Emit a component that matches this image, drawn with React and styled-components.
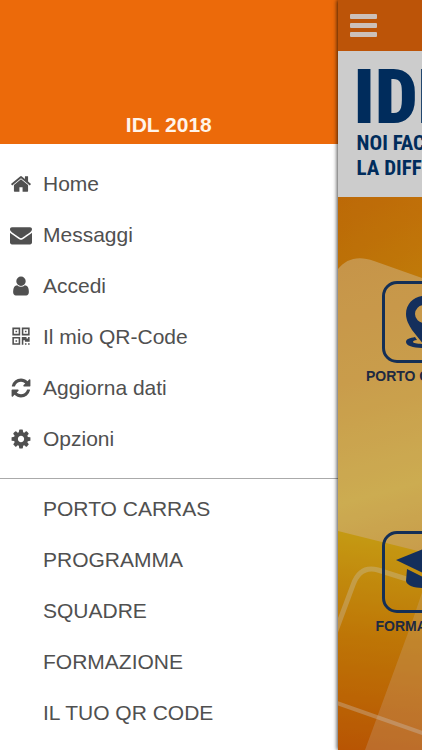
import styled, { createGlobalStyle } from "styled-components"

const icons = {
	home: "M1472 992v480q0 26-19 45t-45 19h-384v-384h-256v384h-384q-26 0-45-19t-19-45v-480q0-1 .5-3t.5-3l575-474 575 474q1 2 1 6zm223-69l-62 74q-8 9-21 11h-3q-13 0-21-7l-692-577-692 577q-12 8-24 7-13-2-21-11l-62-74q-8-10-7-23.500t11-21.500l719-599q32-26 76-26t76 26l244 204v-195q0-14 9-23t23-9h192q14 0 23 9t9 23v408l219 182q10 8 11 21.500t-7 23.500z",
	envelope:
		"M1792 710v794q0 66-47 113t-113 47h-1472q-66 0-113-47t-47-113v-794q44 49 101 87 362 246 497 345 57 42 92.500 65.500t94.500 48 110 24.500h2q51 0 110-24.500t94.500-48 92.500-65.500q170-123 498-345 57-39 100-87zm0-294q0 79-49 151t-122 123q-376 261-468 325-10 7-42.500 30.500t-54 38-52 32.500-57.500 27-50 9h-2q-23 0-50-9t-57.500-27-52-32.500-54-38-42.500-30.500q-91-64-262-182.500t-205-142.500q-62-42-117-115.500t-55-136.500q0-78 41.500-130t118.500-52h1472q65 0 112.500 47t47.500 113z",
	user: "M1536 1399q0 109-62.500 187t-150.500 78h-854q-88 0-150.500-78t-62.500-187q0-85 8.500-160.500t31.500-152 58.500-131 94-89 134.500-34.500q131 128 313 128t313-128q76 0 134.500 34.500t94 89 58.500 131 31.500 152 8.500 160.500zm-256-887q0 159-112.500 271.500t-271.500 112.500-271.500-112.500-112.500-271.500 112.500-271.500 271.500-112.500 271.500 112.500 112.500 271.500z",
	qrcode: "M576 1152v128h-128v-128h128zm0-768v128h-128v-128h128zm768 0v128h-128v-128h128zm-1024 1023h384v-383h-384v383zm0-767h384v-384h-384v384zm768 0h384v-384h-384v384zm-256 256v640h-640v-640h640zm512 512v128h-128v-128h128zm256 0v128h-128v-128h128zm0-512v384h-384v-128h-128v384h-128v-640h384v128h128v-128h128zm-768-768v640h-640v-640h640zm768 0v640h-640v-640h640z",
	refresh:
		"M1639 1056q0 5-1 7-64 268-268 434.500t-478 166.500q-146 0-282.500-55t-243.500-157l-129 129q-19 19-45 19t-45-19-19-45v-448q0-26 19-45t45-19h448q26 0 45 19t19 45-19 45l-137 137q71 66 161 102t187 36q134 0 250-65t186-179q11-17 53-117 8-23 30-23h192q13 0 22.500 9.500t9.500 22.500zm25-800v448q0 26-19 45t-45 19h-448q-26 0-45-19t-19-45 19-45l138-138q-148-137-349-137-134 0-250 65t-186 179q-11 17-53 117-8 23-30 23h-199q-13 0-22.500-9.500t-9.500-22.500v-7q65-268 270-434.500t480-166.500q146 0 284 55.500t245 156.500l130-129q19-19 45-19t45 19 19 45z",
	cog: "M1152 896q0-106-75-181t-181-75-181 75-75 181 75 181 181 75 181-75 75-181zm512-109v222q0 12-8 23t-20 13l-185 28q-19 54-39 91 35 50 107 138 10 12 10 25t-9 23q-27 37-99 108t-94 71q-12 0-26-9l-138-108q-44 23-91 38-16 136-29 186-7 28-36 28h-222q-14 0-24.500-8.500t-11.500-21.500l-28-184q-49-16-90-37l-141 107q-10 9-25 9-14 0-25-11-126-114-165-168-7-10-7-23 0-12 8-23 15-21 51-66.500t54-70.500q-27-50-41-99l-183-27q-13-2-21-12.500t-8-23.500v-222q0-12 8-23t19-13l186-28q14-46 39-92-40-57-107-138-10-12-10-24 0-10 9-23 26-36 98.500-107.500t94.500-71.500q13 0 26 10l138 107q44-23 91-38 16-136 29-186 7-28 36-28h222q14 0 24.500 8.500t11.500 21.500l28 184q49 16 90 37l142-107q9-9 24-9 13 0 25 10 129 119 165 170 7 8 7 22 0 12-8 23-15 21-51 66.500t-54 70.500q26 50 41 98l183 28q13 2 21 12.500t8 23.500z",
}

const mainLinks = [
	{ icon: "home", label: "Home" },
	{ icon: "envelope", label: "Messaggi" },
	{ icon: "user", label: "Accedi" },
	{ icon: "qrcode", label: "Il mio QR-Code" },
	{ icon: "refresh", label: "Aggiorna dati" },
	{ icon: "cog", label: "Opzioni" },
]

const pageLinks = [
	"PORTO CARRAS",
	"PROGRAMMA",
	"SQUADRE",
	"FORMAZIONE",
	"IL TUO QR CODE",
]

const PinIcon = () => (
	<svg viewBox="0 0 82 82" aria-hidden="true">
		<path
			fillRule="evenodd"
			d="M42 15c-10 0-18 8-18 18 0 6 3 11 6 16l12 15 12-15c3-5 6-10 6-16 0-10-8-18-18-18zm0 9a9 9 0 1 1 0 18 9 9 0 0 1 0-18z"
		/>
		<path d="M33 56c-5 1-9 2-9 5 0 4 8 6 18 6s18-2 18-6c0-3-4-4-9-5l-2 3c3 0 4 1 4 2 0 1-5 2-11 2s-11-1-11-2c0-1 1-2 4-2z" />
	</svg>
)

const CapIcon = () => (
	<svg viewBox="0 0 82 82" aria-hidden="true">
		<path d="M14 29l27-11 27 11-27 13z" />
		<path d="M25 38l16 8 16-8 1 12c-2 5-9 7-17 7s-16-2-17-7z" />
		<path d="M65 30h2v18h-2z" />
	</svg>
)

const Backdrop = () => (
	<BackdropArt
		viewBox="0 0 422 553"
		preserveAspectRatio="xMinYMin slice"
		aria-hidden="true"
	>
		<defs>
			<linearGradient id="base" gradientUnits="userSpaceOnUse" x1="0" y1="0" x2="-60" y2="553">
				<stop offset="0" stopColor="#f08c0c" />
				<stop offset="0.2" stopColor="#f0a00c" />
				<stop offset="0.6" stopColor="#f6c018" />
				<stop offset="0.78" stopColor="#ee9408" />
				<stop offset="1" stopColor="#e66804" />
			</linearGradient>
			<linearGradient id="sheet" gradientUnits="userSpaceOnUse" x1="0" y1="62" x2="80" y2="355">
				<stop offset="0" stopColor="#f8ba5c" />
				<stop offset="0.4" stopColor="#fcc45e" />
				<stop offset="0.78" stopColor="#ffd766" />
				<stop offset="1" stopColor="#fbc45e" />
			</linearGradient>
			<linearGradient id="glow" x1="0" y1="0" x2="1" y2="0">
				<stop offset="0" stopColor="#e06c00" stopOpacity="0.25" />
				<stop offset="0.2" stopColor="#e06c00" stopOpacity="0" />
			</linearGradient>
		</defs>
		<rect width="422" height="553" fill="url(#base)" />
		<rect width="422" height="300" fill="url(#glow)" />
		<path d="M0 72C8 62 20 58 36 64L422 201V440L0 334z" fill="url(#sheet)" />
		<path d="M27 553L74 425L92 372L422 470V553z" fill="#ffe0d0" fillOpacity="0.24" />
		<path
			d="M-4 439L15 388Q22 368 40 373L422 493"
			fill="none"
			stroke="#fff"
			strokeOpacity="0.3"
			strokeWidth="5"
		/>
		<path
			d="M-4 505L422 654"
			fill="none"
			stroke="#fff"
			strokeOpacity="0.32"
			strokeWidth="4"
		/>
	</BackdropArt>
)

const App = () => {
	return (
		<Shell>
			<GlobalStyle />
			<Drawer>
				<DrawerHeader>
					<h1>IDL 2018</h1>
				</DrawerHeader>
				<MenuList>
					{mainLinks.map(({ icon, label }) => (
						<li key={label}>
							<MenuLink href="#">
								<svg viewBox="0 0 1792 1792" aria-hidden="true">
									<path d={icons[icon]} />
								</svg>
								{label}
							</MenuLink>
						</li>
					))}
				</MenuList>
				<Divider />
				<MenuList $compact>
					{pageLinks.map((label) => (
						<li key={label}>
							<MenuLink href="#" $plain>
								{label}
							</MenuLink>
						</li>
					))}
				</MenuList>
			</Drawer>
			<Page>
				<Toolbar>
					<MenuButton type="button" aria-label="Menu">
						<span />
						<span />
						<span />
					</MenuButton>
				</Toolbar>
				<Banner>
					<Brand>IDL</Brand>
					<Slogan>NOI FACCIAMO</Slogan>
					<Slogan>LA DIFFERENZA</Slogan>
				</Banner>
				<Content>
					<Backdrop />
					<Tiles>
						<Tile href="#">
							<TileIcon>
								<PinIcon />
							</TileIcon>
							PORTO CARRAS
						</Tile>
						<Tile href="#">
							<TileIcon>
								<CapIcon />
							</TileIcon>
							FORMAZIONE
						</Tile>
					</Tiles>
				</Content>
			</Page>
		</Shell>
	)
}

const GlobalStyle = createGlobalStyle`
	* {
		box-sizing: border-box;
	}
	body {
		margin: 0;
		background-color: white;
		font-family: "Liberation Sans", Arial, sans-serif;
	}
`
const Shell = styled.div`
	display: flex;
	min-height: 100vh;
	overflow: hidden;
`
const Drawer = styled.nav`
	flex: 0 0 80%;
	background-color: white;
`
const DrawerHeader = styled.header`
	display: flex;
	align-items: flex-end;
	justify-content: center;
	height: 144px;
	padding-bottom: 7px;
	background-color: #ec6a0a;
	h1 {
		margin: 0;
		color: #fff4ea;
		font-size: 21px;
		line-height: 24px;
	}
`
const MenuList = styled.ul`
	margin: 0;
	padding: ${(props) => (props.$compact ? "4px 0 0" : "14px 0")};
	list-style: none;
`
const MenuLink = styled.a`
	display: flex;
	align-items: center;
	gap: 11px;
	height: 51px;
	padding-left: ${(props) => (props.$plain ? "43px" : "10px")};
	color: #505050;
	font-size: 21px;
	text-decoration: none;
	svg {
		width: 22px;
		height: 22px;
		fill: #505050;
	}
`
const Divider = styled.hr`
	margin: 0;
	border: none;
	border-top: 1px solid #aaa;
`
const Page = styled.main`
	position: relative;
	display: flex;
	flex: 0 0 100%;
	flex-direction: column;
	box-shadow: -1px 0 4px rgba(0, 0, 0, 0.7);
	/* dims the page while the drawer is open */
	&::after {
		content: "";
		position: absolute;
		inset: 0;
		background-color: rgba(0, 0, 0, 0.2);
	}
`
const Toolbar = styled.header`
	display: flex;
	align-items: center;
	height: 51px;
	padding-left: 12px;
	background-color: #ec6a0a;
`
const MenuButton = styled.button`
	display: flex;
	flex-direction: column;
	gap: 4px;
	padding: 0;
	border: none;
	background: none;
	span {
		width: 27px;
		height: 5px;
		border-radius: 1px;
		background-color: #fff0e8;
	}
`
const Banner = styled.div`
	height: 146px;
	padding: 12px 0 0 16px;
	background-color: white;
	color: #003873;
	font-family: "Roboto Condensed", Roboto, sans-serif;
	font-weight: bold;
	white-space: nowrap;
`
const Brand = styled.div`
	font-size: 76px;
	font-weight: 900;
	line-height: 68px;
`
const Slogan = styled.div`
	padding-left: 3px;
	font-size: 21px;
	line-height: 25px;
`
const Content = styled.section`
	position: relative;
	flex: 1;
`
const BackdropArt = styled.svg`
	position: absolute;
	inset: 0;
	width: 100%;
	height: 100%;
`
const Tiles = styled.div`
	position: relative;
	display: flex;
	flex-direction: column;
	align-items: flex-start;
	gap: 145px;
	padding: 84px 0 0 25px;
`
const Tile = styled.a`
	display: flex;
	flex-direction: column;
	align-items: center;
	gap: 4px;
	width: 120px;
	color: #283452;
	font-size: 14px;
	font-weight: bold;
	line-height: 19px;
	text-decoration: none;
	white-space: nowrap;
`
const TileIcon = styled.span`
	width: 82px;
	height: 82px;
	border: 3px solid #193b6c;
	border-radius: 15px;
	svg {
		display: block;
		margin: -3px;
		width: 82px;
		height: 82px;
		fill: #193b74;
	}
`

export default App
